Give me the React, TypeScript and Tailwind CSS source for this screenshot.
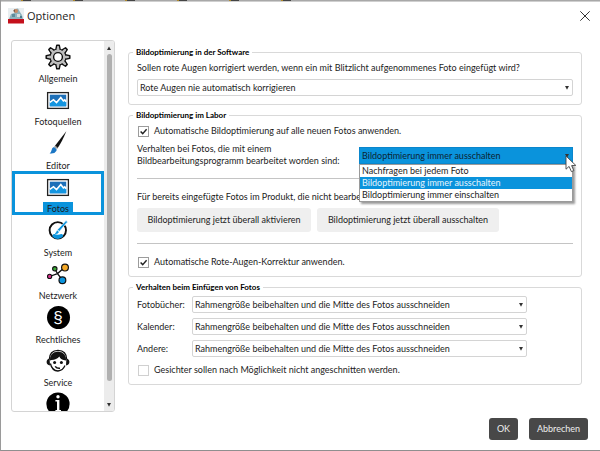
import type { ReactNode } from "react";

const ink = "#111";
const blue = "#0a93dc";

function GearIcon() {
  const teeth = [0, 45, 90, 135, 180, 225, 270, 315];
  return (
    <svg viewBox="0 0 26 26" className="size-[26px]">
      {teeth.map((a) => (
        <path key={a} d="M10.8 6 L11.8 1.2 H14.2 L15.2 6Z" transform={`rotate(${a} 13 13)`} fill="#bdbdbd" stroke={ink} strokeWidth="1.5" strokeLinejoin="round" />
      ))}
      <circle cx="13" cy="13" r="8" fill="#bdbdbd" stroke={ink} strokeWidth="1.2" />
      {teeth.map((a) => (
        <path key={a} d="M11.4 7 L12.1 2.6 H13.9 L14.6 7Z" transform={`rotate(${a} 13 13)`} fill="#bdbdbd" />
      ))}
      <circle cx="13" cy="13" r="4.4" fill="#fff" stroke={ink} strokeWidth="1.4" />
    </svg>
  );
}

function PictureIcon() {
  return (
    <svg viewBox="0 0 26 26" className="size-[26px]">
      <rect x="2.6" y="5.6" width="20.8" height="15.8" fill="#fff" stroke="#222" strokeWidth="1.3" />
      <rect x="4.8" y="7.7" width="16.4" height="11.6" fill="#1c6fb8" />
      <path d="M4.8 15 L8.5 12.5 L11.5 15.2 L15.8 10.3 L18.4 13.7 L19.8 12.8 L21.2 14.5 V19.3 H4.8Z" fill="#1495e0" />
      <path d="M4.8 15.4 L8.5 12.7 L11.5 15.5 L15.8 10.5 L18.4 13.9 L19.8 12.9 L21.2 14.7" fill="none" stroke="#fff" strokeWidth="1.6" />
    </svg>
  );
}

function BrushIcon() {
  return (
    <svg viewBox="0 0 26 26" className="size-[26px]">
      <path d="M21.3 1.2 L9.6 16.2 L12.3 18.4 Q17 12 21.3 1.2Z" fill={ink} />
      <path d="M10.2 15.4 L9.2 16.9 L11.6 18.8 L12.7 17.6Z" fill="#999" />
      <path d="M9 17 Q7 17.5 6.6 20 Q6.2 22.6 4.6 23.4 Q9.5 24.2 11.3 21 Q12 19.7 11.4 18.9Z" fill="#1b76c4" />
    </svg>
  );
}

function SystemIcon() {
  return (
    <svg viewBox="0 0 26 26" className="size-[26px]">
      <circle cx="12.8" cy="13.3" r="8.2" fill="#fff" stroke={ink} strokeWidth="1.9" />
      <path d="M7.4 19.4 Q7.6 16.8 9.4 17 Q12.8 18.6 16.2 17 Q18 16.8 18.2 19.2 Q15.5 22.2 12.8 22 Q9.8 22 7.4 19.4Z" fill={blue} />
      <path d="M21 3.6 Q22.6 3.8 22.2 5.2 L14.4 14.4 L12.4 12.8Z" fill={blue} stroke="#fff" strokeWidth="0.6" />
      <path d="M12 13.2 L14 14.9 Q13 17.4 9.8 16.8 Q11.4 15.6 12 13.2Z" fill={blue} />
    </svg>
  );
}

function NetworkIcon() {
  return (
    <svg viewBox="0 0 26 26" className="size-[26px]" stroke={ink}>
      <path d="M19.5 6.5 L12.5 12.6 L4.5 15.5 M9.8 8 L12.5 12.6 L17.4 19" fill="none" strokeWidth="1.3" />
      <circle cx="20" cy="6.6" r="3.4" fill="#f5a927" strokeWidth="1.2" />
      <circle cx="9.8" cy="7.8" r="2.2" fill="#3aa935" strokeWidth="1.1" />
      <circle cx="4.6" cy="15.4" r="2.1" fill="#d6358e" strokeWidth="1.1" />
      <circle cx="17.4" cy="19.2" r="3.4" fill={blue} strokeWidth="1.2" />
    </svg>
  );
}

function LegalIcon() {
  return (
    <span className="flex size-[23px] items-center justify-center rounded-full bg-black font-['Liberation_Sans',sans-serif] text-[17px] leading-none text-white">
      §
    </span>
  );
}

function ServiceIcon() {
  return (
    <svg viewBox="0 0 26 26" className="size-[26px]">
      <path d="M4.3 11.5 Q4.5 2.6 13 2.4 Q21.5 2.6 21.7 11.5" fill="none" stroke={ink} strokeWidth="1.3" />
      <path d="M4.9 12.5 Q4.8 4 13 3.8 Q21.2 4 21.1 12.5 L19.6 12.2 Q15.5 11.6 14.4 8.4 Q11.5 11.6 6.6 12Z" fill={ink} />
      <path d="M4.6 10.6 Q1.6 11.4 1.6 14 Q1.6 16.6 5 17.4Z M21.4 10.6 Q24.4 11.4 24.4 14 Q24.4 16.6 21 17.4Z" fill={ink} />
      <path d="M5.4 15.5 Q7 22.8 13 23 Q17.8 22.8 20 17.6" fill="none" stroke={ink} strokeWidth="1.3" />
      <circle cx="9.6" cy="14.6" r="1.5" fill={ink} />
      <circle cx="16.4" cy="14.6" r="1.5" fill={ink} />
      <path d="M10.2 18.4 Q11.8 20.6 15 20.2" fill="none" stroke={ink} strokeWidth="1.6" />
    </svg>
  );
}

function InfoIcon() {
  return (
    <svg viewBox="0 0 26 26" className="size-[26px]">
      <circle cx="13" cy="13" r="11.6" fill="#000" />
      <circle cx="13" cy="5.8" r="1.7" fill="#fff" />
      <path d="M10.4 9 H14.4 V19 H16 V20.6 H10.4 V19 H12 V10.6 H10.4Z" fill="#fff" />
    </svg>
  );
}

function LogoIcon() {
  return (
    <svg viewBox="0 0 16 16" className="size-4">
      <rect width="16" height="11" x="0" y="0" fill="#e9eef0" />
      <path d="M1 11 L3 6 L6 5 L7 1 L10 0.6 L12 4 L14 7 L15 11Z" fill="#8fb3bd" />
      <circle cx="8" cy="3" r="2" fill="#c98a63" />
      <path d="M5 3 L7 1 L7 4Z" fill="#7a5a44" />
      <rect x="4" y="6" width="3" height="3" fill="#5d8c9c" />
      <rect x="9" y="6" width="3" height="3" fill="#d7dfdf" />
      <rect x="12" y="8" width="2" height="2" fill="#4d7f92" />
      <rect y="11" width="16" height="4.5" fill="#c4101c" />
    </svg>
  );
}

function Arrow({ up = false }: { up?: boolean }) {
  return (
    <svg viewBox="0 0 4 4" className="size-1">
      <path d={up ? "M0 4 L2 0.4 L4 4Z" : "M0 0 H4 L2 3.8Z"} fill="#333" />
    </svg>
  );
}

const pages: { name: string; icon: ReactNode; active?: boolean; iconOnly?: boolean }[] = [
  { name: "Allgemein", icon: <GearIcon /> },
  { name: "Fotoquellen", icon: <PictureIcon /> },
  { name: "Editor", icon: <BrushIcon /> },
  { name: "Fotos", icon: <PictureIcon />, active: true },
  { name: "System", icon: <SystemIcon /> },
  { name: "Netzwerk", icon: <NetworkIcon /> },
  { name: "Rechtliches", icon: <LegalIcon /> },
  { name: "Service", icon: <ServiceIcon /> },
  { name: "Info", icon: <InfoIcon />, iconOnly: true },
];

function Sidebar() {
  return (
    <nav className="flex w-[104px] shrink-0 overflow-hidden rounded-[3px] border border-[#d4d4d4]">
      <ul className="grid h-[391px] flex-1 auto-rows-fr">
        {pages.map((p) => (
          <li key={p.name} className="min-h-0">
            <button
              type="button"
              aria-label={p.name}
              className={
                p.active
                  ? "flex h-full w-full flex-col items-center outline-3 -outline-offset-3 outline-[#0a93dc]"
                  : "flex h-full w-full flex-col items-center"
              }
            >
              <span className="flex h-[31px] shrink-0 items-center">{p.icon}</span>
              {!p.iconOnly && (
                <span className={p.active ? "bg-[#0a93dc] px-1 leading-[13px]" : "leading-[13px]"}>
                  {p.name}
                </span>
              )}
            </button>
          </li>
        ))}
      </ul>
      <div className="flex w-[10px] flex-col items-center bg-[#ececec]">
        <span className="flex h-[13px] items-center"><Arrow up /></span>
        <span className="mb-[17px] w-[5px] flex-1 rounded-full bg-[#b0b0b0]" />
        <span className="flex h-[13px] items-center"><Arrow /></span>
      </div>
    </nav>
  );
}

function Group({ title, className, children }: { title: string; className: string; children: ReactNode }) {
  return (
    <fieldset className={`min-w-0 rounded-[3px] border border-[#d9d9d9] px-2 ${className}`}>
      <legend className="-ml-1 px-[3px] text-[8px] leading-3 font-bold text-black">{title}</legend>
      {children}
    </fieldset>
  );
}

function Combo({ id, value, options, active = false }: { id: string; value: string; options?: string[]; active?: boolean }) {
  return (
    <div className="relative flex min-w-0 flex-1 items-center">
      <select
        id={id}
        defaultValue={value}
        className={
          active
            ? "h-[17px] w-full appearance-none border border-[#0a86cc] bg-[#0a93dc] px-[2px] leading-[15px] text-[#0c2433]"
            : "h-[17px] w-full appearance-none rounded-[2px] border border-[#d4d4d4] bg-white px-[2px] leading-[15px]"
        }
      >
        {(options ?? [value]).map((o) => (
          <option key={o}>{o}</option>
        ))}
      </select>
      <span className="pointer-events-none absolute right-1 flex"><Arrow /></span>
    </div>
  );
}

function Check({ id, label, checked = false }: { id: string; label: string; checked?: boolean }) {
  return (
    <div className="flex h-4 items-center pl-px">
      <span className="relative flex size-[11px] shrink-0">
        <input
          id={id}
          type="checkbox"
          defaultChecked={checked}
          className="size-[11px] appearance-none border border-[#d0d0d0] bg-white checked:border-[#9c9c9c]"
        />
        {checked && (
          <svg viewBox="0 0 11 11" className="pointer-events-none absolute inset-0 size-[11px]">
            <path d="M2.6 5.4 L4.7 7.6 L8.6 3.2" fill="none" stroke="#222" strokeWidth="1.4" />
          </svg>
        )}
      </span>
      <label htmlFor={id} className="pl-[5px]">{label}</label>
    </div>
  );
}

const labOptions = [
  "Nachfragen bei jedem Foto",
  "Bildoptimierung immer ausschalten",
  "Bildoptimierung immer einschalten",
];

const crop = "Rahmengröße beibehalten und die Mitte des Fotos ausschneiden";

function LabCombo() {
  return (
    <div className="relative flex w-[214px] shrink-0">
      <Combo id="lab" value={labOptions[1]} options={labOptions} active />
      <ul role="listbox" aria-label="Verhalten" className="absolute inset-x-0 top-[17px] z-10 border border-[#9a9a9a] bg-white shadow-[2px_2px_2px_rgba(0,0,0,0.4)]">
        {labOptions.map((o, i) => (
          <li
            key={o}
            role="option"
            aria-selected={i === 1}
            className={i === 1 ? "bg-[#0a93dc] px-[2px] leading-3 text-[#e6f5fd]" : "px-[2px] leading-3"}
          >
            {o}
          </li>
        ))}
      </ul>
      <svg viewBox="0 0 12 18" className="pointer-events-none absolute top-2 -right-1 z-20 h-[18px] w-3">
        <path d="M1 1 V14.2 L4.1 11.4 L6.4 16.6 L8.8 15.6 L6.6 10.6 L10.8 10.4Z" fill="#fff" stroke="#444" strokeWidth="0.9" />
      </svg>
    </div>
  );
}

export default function App() {
  return (
    <div className="flex h-screen flex-col overflow-hidden border-b border-l border-b-[#8f8f8f] border-l-[#9a9a9a] bg-white font-['Lato','Open_Sans',sans-serif] text-[9px] text-[#1c1c1c]">
      <div className="flex h-0.5 shrink-0 gap-[42px] border-b border-[#cfcfcf] bg-[#a8a8a8] pl-5">
        {["a", "b", "c", "d", "e", "f"].map((k) => (
          <span key={k} className="w-[10px] border-l-2 border-[#b08a2a] bg-[#444]" />
        ))}
      </div>
      <header className="flex h-7 shrink-0 items-center pr-[10px] pl-[7px]">
        <LogoIcon />
        <h1 className="flex-1 pl-[3px] font-['Open_Sans','Noto_Sans',sans-serif] text-[11px] leading-4">Optionen</h1>
        <button type="button" aria-label="Schließen">
          <svg viewBox="0 0 10 10" className="size-[10px]">
            <path d="M0.3 0.3 L9.7 9.7 M9.7 0.3 L0.3 9.7" stroke="#333" strokeWidth="1" />
          </svg>
        </button>
      </header>

      <main className="flex min-h-0 flex-1 pt-[10px] pr-[18px] pl-[10px]">
        <Sidebar />
        <div className="flex min-w-0 flex-1 flex-col gap-1 pt-1.5 pl-[13px]">
          <Group title="Bildoptimierung in der Software" className="pb-2">
            <label htmlFor="redeye" className="mt-0.5 mb-[3px] block leading-4">
              Sollen rote Augen korrigiert werden, wenn ein mit Blitzlicht aufgenommenes Foto eingefügt wird?
            </label>
            <Combo id="redeye" value="Rote Augen nie automatisch korrigieren" />
          </Group>

          <Group title="Bildoptimierung im Labor" className="pt-0.5 pb-1.5">
            <Check id="auto" label="Automatische Bildoptimierung auf alle neuen Fotos anwenden." checked />
            <div className="mt-1 flex items-start justify-between">
              <label htmlFor="lab" className="leading-3">
                Verhalten bei Fotos, die mit einem
                <br />
                Bildbearbeitungsprogramm bearbeitet worden sind:
              </label>
              <div className="flex pt-1">
                <LabCombo />
              </div>
            </div>
            <hr className="mt-[11px] border-[#c4c4c4]" />
            <div className="mt-[10px] flex">
              <p className="w-[222px] overflow-hidden leading-4 whitespace-nowrap">
                Für bereits eingefügte Fotos im Produkt, die nicht bearbe
              </p>
            </div>
            <div className="mt-[3px] flex gap-1.5">
              <button type="button" className="h-6 w-[174px] rounded-[3px] bg-[#efefef]">
                Bildoptimierung jetzt überall aktivieren
              </button>
              <button type="button" className="h-6 w-[182px] rounded-[3px] bg-[#efefef]">
                Bildoptimierung jetzt überall ausschalten
              </button>
            </div>
            <hr className="mt-[11px] mb-[10px] border-[#c4c4c4]" />
            <Check id="redauto" label="Automatische Rote-Augen-Korrektur anwenden." checked />
          </Group>

          <Group title="Verhalten beim Einfügen von Fotos" className="pt-[3px] pb-1.5">
            <div className="flex flex-col gap-[5px] pr-[46px]">
              {["Fotobücher", "Kalender", "Andere"].map((name) => (
                <div key={name} className="flex items-center">
                  <label htmlFor={name} className="w-[55px] leading-4">{name}:</label>
                  <Combo id={name} value={crop} />
                </div>
              ))}
              <Check id="faces" label="Gesichter sollen nach Möglichkeit nicht angeschnitten werden." />
            </div>
          </Group>
        </div>
      </main>

      <footer className="flex shrink-0 justify-end gap-[11px] pt-1.5 pr-3 pb-[10px]">
        <button type="button" className="h-[22px] w-[29px] rounded-[3px] bg-[#484848] text-[#eee]">OK</button>
        <button type="button" className="h-[22px] w-[59px] rounded-[3px] bg-[#484848] text-[#eee]">Abbrechen</button>
      </footer>
    </div>
  );
}
